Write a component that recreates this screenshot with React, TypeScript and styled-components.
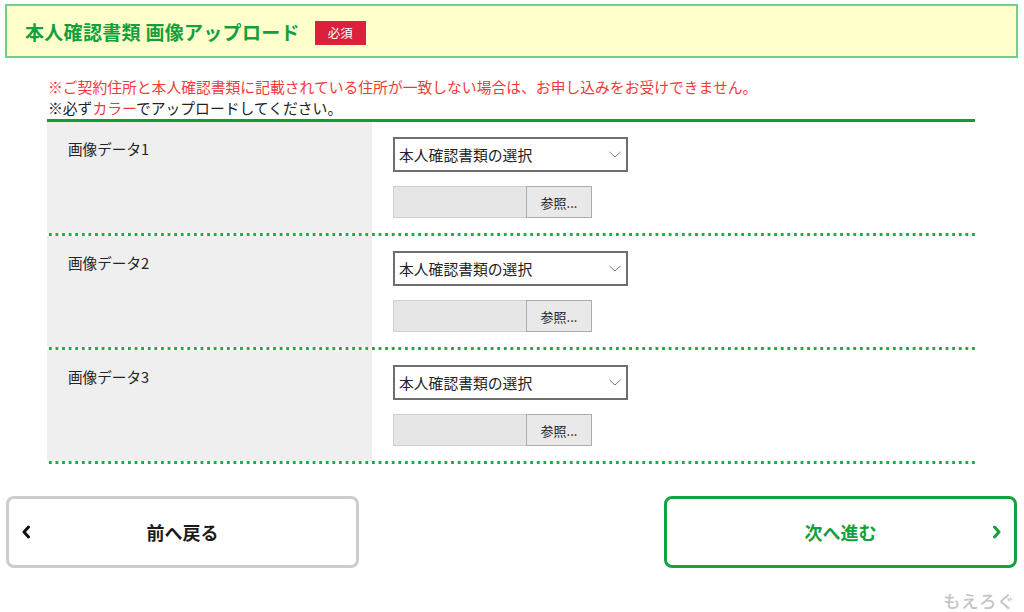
import React from "react";
import styled, { createGlobalStyle } from "styled-components";

const Global = createGlobalStyle`
  html, body { margin: 0; padding: 0; background: #fff; }
  body { font-family: "Noto Sans CJK JP", "Noto Sans", sans-serif; color: #222; width: 1024px; height: 612px; overflow: hidden; }
  * { box-sizing: border-box; }
`;

const Page = styled.div`
  display: flex;
  flex-direction: column;
  padding: 4px 6px 0 5px;
`;

const Header = styled.div`
  height: 54px;
  border: 2px solid #6fcf8c;
  background: #ffffcc;
  display: flex;
  align-items: center;
  padding-left: 18px;
  gap: 15px;
`;

const Title = styled.h1`
  margin: 0;
  font-size: 19px;
  font-weight: 700;
  color: #12a03c;
  letter-spacing: 0.3px;
  line-height: 1;
`;

const Badge = styled.span`
  display: inline-flex;
  align-items: center;
  justify-content: center;
  width: 51px;
  height: 24px;
  background: #dc1f3a;
  color: #fff;
  font-size: 12.5px;
  margin-top: 3px;
`;

const Section = styled.div`
  margin: 18px 43px 0 42px;
`;

const Note = styled.p<{ $red?: boolean }>`
  margin: 0;
  font-size: 14.8px;
  line-height: 21px;
  padding-left: 1px;
  color: ${(p) => (p.$red ? "#f03a3a" : "#222")};
  span { color: #f03a3a; }
`;

const Table = styled.div`
  margin-top: 1px;
  border-top: 3px solid #0c9e3c;
  display: flex;
  flex-direction: column;
`;

const Row = styled.div`
  display: grid;
  grid-template-columns: 325px 1fr;
  padding-bottom: 3px;
  background-image: radial-gradient(circle, #19ac48 1.4px, transparent 1.6px);
  background-size: 6.6px 3px;
  background-repeat: repeat-x;
  background-position: 0 100%;
`;

const Label = styled.div`
  background: #efefef;
  padding: 16px 0 0 21px;
  font-size: 14.6px;
  line-height: 22px;
  color: #222;
`;

const Fields = styled.div`
  display: flex;
  flex-direction: column;
  gap: 14px;
  padding: 15px 0 15px 21px;
`;

const Select = styled.div`
  width: 235px;
  height: 35px;
  border: 2px solid #6e6e6e;
  background: #fff;
  display: flex;
  align-items: center;
  justify-content: space-between;
  padding: 0 4px 0 4px;
  font-size: 14.8px;
  color: #222;
`;

const FileInput = styled.div`
  display: flex;
  height: 32px;
  width: 199px;
`;

const FileField = styled.div`
  width: 133px;
  background: #e6e6e6;
  border: 1px solid #cfcfcf;
  border-right: none;
`;

const FileButton = styled.div`
  width: 66px;
  background: #e9e9e9;
  border: 1px solid #ababab;
  display: flex;
  align-items: center;
  justify-content: center;
  font-size: 13px;
  color: #222;
`;

const Buttons = styled.div`
  display: flex;
  justify-content: space-between;
  margin: 32px 1px 0 1px;
`;

const NavButton = styled.div<{ $primary?: boolean }>`
  width: 353px;
  height: 72px;
  border: 3px solid ${(p) => (p.$primary ? "#12a43c" : "#cccccc")};
  border-radius: 8px;
  background: #fff;
  display: flex;
  align-items: center;
  position: relative;
  justify-content: center;
  font-size: 18px;
  font-weight: 700;
  color: ${(p) => (p.$primary ? "#12a03c" : "#1a1a1a")};
`;

const Chevron = styled.span<{ $side: "left" | "right" }>`
  position: absolute;
  top: 50%;
  transform: translateY(-50%);
  ${(p) => (p.$side === "left" ? "left: 12px;" : "right: 12px;")}
  display: flex;
`;

const Watermark = styled.div`
  align-self: flex-end;
  margin-top: 20px;
  margin-right: 3px;
  font-size: 17.5px;
  font-weight: 500;
  color: #c4c4c4;
  letter-spacing: 0.5px;
`;

const ChevronDown = () => (
  <svg width="14" height="9" viewBox="0 0 14 9">
    <path d="M1.5 2 L7 7 L12.5 2" fill="none" stroke="#777" strokeWidth="1" />
  </svg>
);

const Arrow = ({ dir, color }: { dir: "left" | "right"; color: string }) => (
  <svg width="10" height="14" viewBox="0 0 10 14">
    <path
      d={dir === "left" ? "M7.5 2 L3 7 L7.5 12" : "M2.5 2 L7 7 L2.5 12"}
      fill="none"
      stroke={color}
      strokeWidth="3"
      strokeLinejoin="round"
      strokeLinecap="round"
    />
  </svg>
);

const rows = ["画像データ1", "画像データ2", "画像データ3"];

export default function App() {
  return (
    <>
      <Global />
      <Page>
        <Header>
          <Title>本人確認書類 画像アップロード</Title>
          <Badge>必須</Badge>
        </Header>
        <Section>
          <Note $red>※ご契約住所と本人確認書類に記載されている住所が一致しない場合は、お申し込みをお受けできません。</Note>
          <Note>
            ※必ず<span>カラー</span>でアップロードしてください。
          </Note>
          <Table>
            {rows.map((r) => (
              <Row key={r}>
                <Label>{r}</Label>
                <Fields>
                  <Select>
                    <span>本人確認書類の選択</span>
                    <ChevronDown />
                  </Select>
                  <FileInput>
                    <FileField />
                    <FileButton>参照...</FileButton>
                  </FileInput>
                </Fields>
              </Row>
            ))}
          </Table>
        </Section>
        <Buttons>
          <NavButton>
            <Chevron $side="left">
              <Arrow dir="left" color="#111" />
            </Chevron>
            前へ戻る
          </NavButton>
          <NavButton $primary>
            次へ進む
            <Chevron $side="right">
              <Arrow dir="right" color="#12a03c" />
            </Chevron>
          </NavButton>
        </Buttons>
        <Watermark>もえろぐ</Watermark>
      </Page>
    </>
  );
}
